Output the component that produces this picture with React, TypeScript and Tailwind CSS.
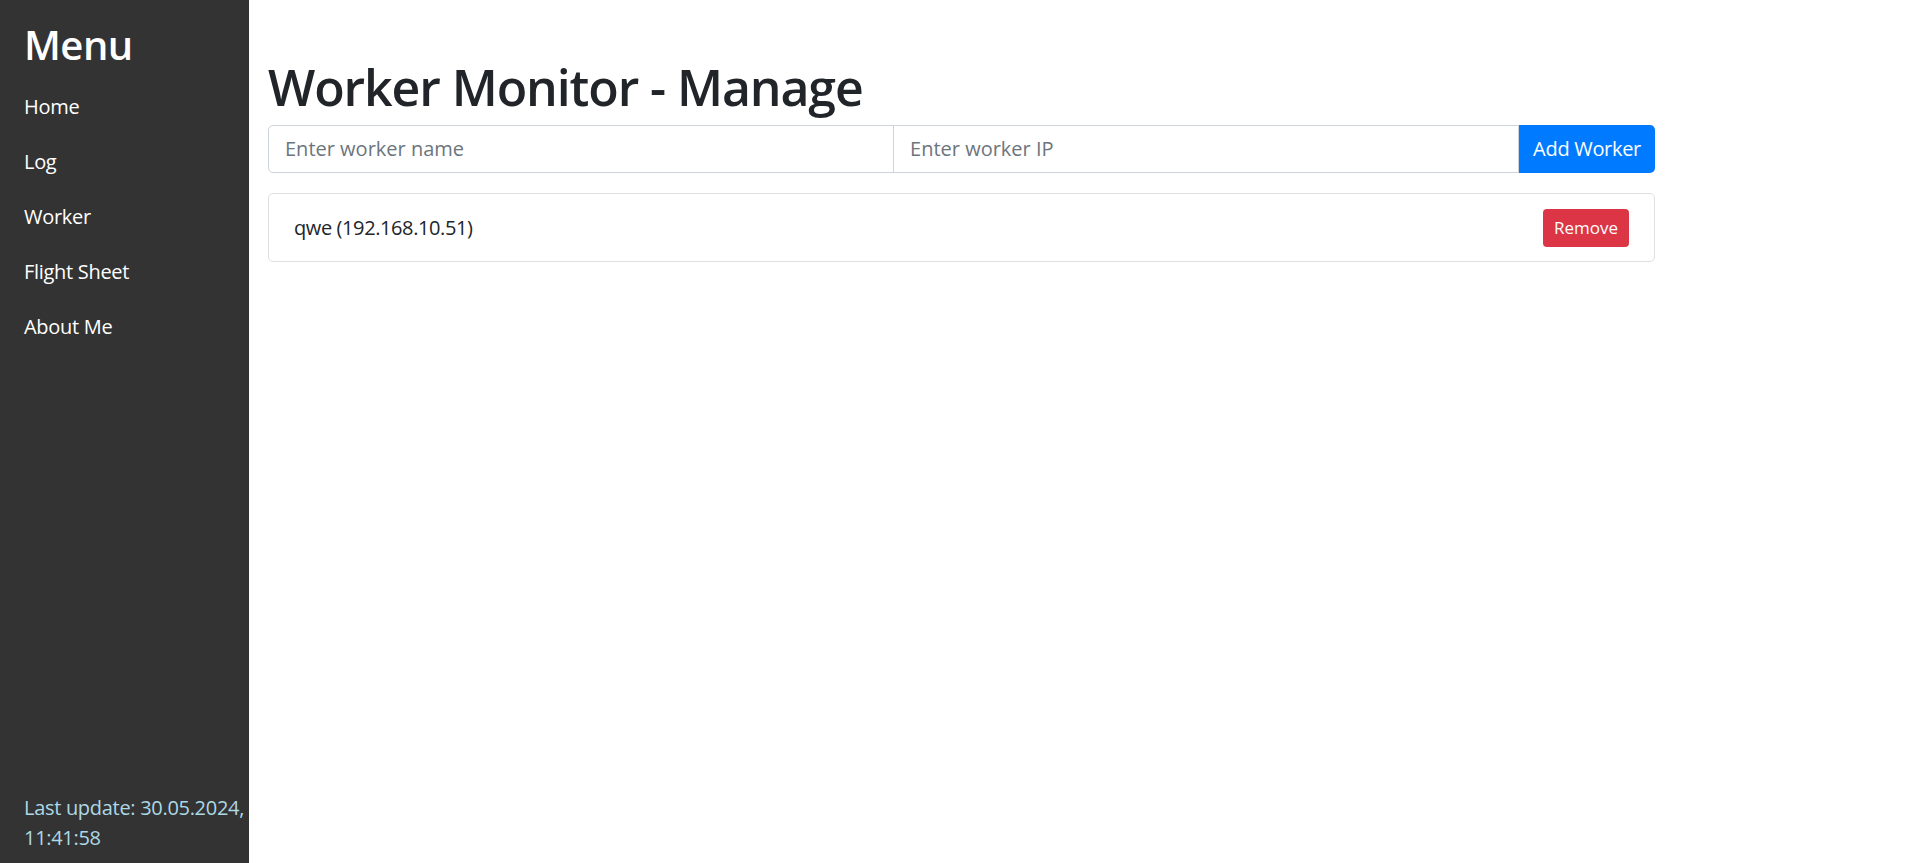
import React from 'react';

const navItems = ['Home', 'Log', 'Worker', 'Flight Sheet', 'About Me'];

interface Worker {
  name: string;
  ip: string;
}

const workers: Worker[] = [{ name: 'qwe', ip: '192.168.10.51' }];

const Sidebar: React.FC = () => {
  return (
    <aside className="w-[249px] shrink-0 h-screen bg-[#333333] text-white flex flex-col justify-between pl-[24px] pr-[10px] pt-[21px] pb-[10px]">
      <div>
        <h2 className="text-[40px] leading-[48px] font-semibold tracking-[-0.5px] mb-[10px]">Menu</h2>
        <nav className="flex flex-col">
          {navItems.map((item) => (
            <a key={item} href="#" className="text-[20px] leading-[30px] py-[12.5px] text-white tracking-[-0.3px]">
              {item}
            </a>
          ))}
        </nav>
      </div>
      <div className="text-[20px] leading-[30px] text-[#add8e6] tracking-[-0.3px]">
        <div className="whitespace-nowrap">Last update: 30.05.2024,</div>
        <div>11:41:58</div>
      </div>
    </aside>
  );
};

const WorkerRow: React.FC<{ worker: Worker }> = ({ worker }) => {
  return (
    <div className="h-[69px] border border-[#dfdfdf] rounded-[5px] px-[25px] flex items-center justify-between">
      <span className="text-[20px] leading-[30px] text-[#212529] tracking-[-0.4px]">
        {worker.name} ({worker.ip})
      </span>
      <button className="h-[38px] px-[11px] bg-[#dc3545] text-white text-[17px] rounded-[4px] flex items-center">
        Remove
      </button>
    </div>
  );
};

export default function App() {
  return (
    <div className="flex min-h-screen bg-white font-['Open_Sans',sans-serif]">
      <Sidebar />
      <main className="flex-1 pl-[19px] pt-[57px]">
        <div className="w-[1387px]">
          <h1 className="text-[50px] leading-[60px] font-semibold text-[#212529] tracking-[-1.1px] mb-[8px]">
            Worker Monitor - Manage
          </h1>
          <div className="flex h-[48px]">
            <input
              placeholder="Enter worker name"
              className="flex-1 min-w-0 border border-[#ced4da] rounded-l-[5px] px-[16px] text-[20px] text-[#495057] placeholder:text-[#6c757d] outline-none"
            />
            <input
              placeholder="Enter worker IP"
              className="flex-1 min-w-0 -ml-px border border-[#ced4da] px-[16px] text-[20px] text-[#495057] placeholder:text-[#6c757d] outline-none"
            />
            <button className="px-[14px] bg-[#007bff] text-white text-[20px] tracking-[-0.3px] rounded-r-[5px] whitespace-nowrap">
              Add Worker
            </button>
          </div>
          <div className="mt-[20px] flex flex-col gap-2">
            {workers.map((w) => (
              <WorkerRow key={w.ip} worker={w} />
            ))}
          </div>
        </div>
      </main>
    </div>
  );
}
